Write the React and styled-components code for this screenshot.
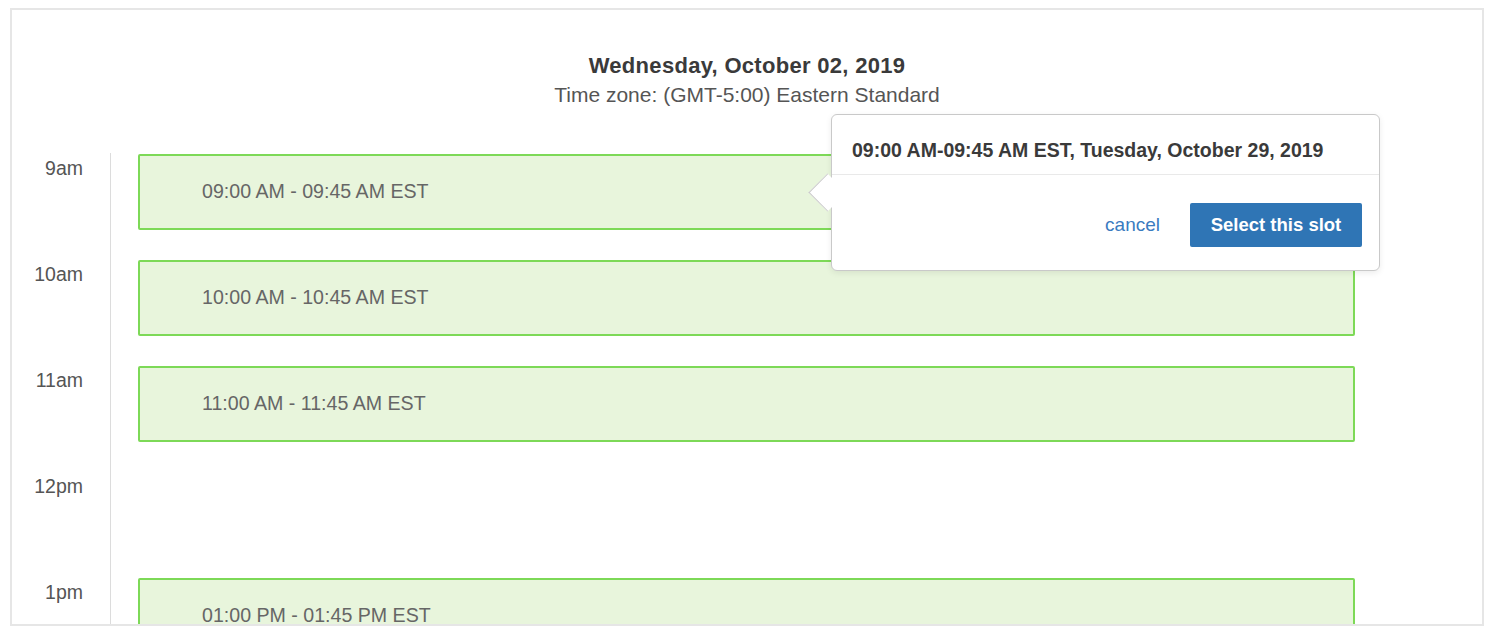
import React from 'react'
import styled, { createGlobalStyle } from 'styled-components'

const GlobalStyle = createGlobalStyle`
  html, body {
    margin: 0;
    padding: 0;
    background: #fff;
  }
  body {
    font-family: "Liberation Sans", Arial, Helvetica, sans-serif;
  }
`

const Page = styled.div`
  padding: 8px 10px 0 10px;
`

const Card = styled.div`
  position: relative;
  box-sizing: border-box;
  width: 1474px;
  height: 618px;
  border: 2px solid #e6e6e6;
  overflow: hidden;
  background: #fff;
`

const Header = styled.div`
  padding-top: 42px;
  text-align: center;
`

const Title = styled.div`
  font-size: 22px;
  font-weight: 700;
  letter-spacing: 0.3px;
  line-height: 28px;
  color: #3a3a3a;
`

const SubTitle = styled.div`
  font-size: 21px;
  line-height: 28px;
  color: #555;
  margin-top: 1px;
`

const Timeline = styled.div`
  margin-top: 44px;
  display: flex;
  flex-direction: column;
`

const HourRow = styled.div`
  display: grid;
  grid-template-columns: 98px 1fr;
  height: 106px;
`

const HourLabel = styled.div`
  box-sizing: border-box;
  padding: 3px 27px 0 0;
  text-align: right;
  font-size: 19.5px;
  line-height: 24px;
  color: #555;
`

const SlotColumn = styled.div`
  border-left: 1px solid #dcdcdc;
  padding: 1px 127px 0 27px;
`

const Slot = styled.div`
  box-sizing: border-box;
  height: 76px;
  display: flex;
  align-items: center;
  padding: 0 0 2px 62px;
  background: #e8f5dc;
  border: 2px solid #7dd957;
  border-radius: 2px;
  font-size: 19.6px;
  color: #666;
`

const Popover = styled.div`
  position: absolute;
  left: 819px;
  top: 104px;
  z-index: 2;
  box-sizing: border-box;
  width: 549px;
  height: 157px;
  background: #fff;
  border: 1px solid #c9c9c9;
  border-radius: 6px;
  box-shadow: 0 2px 6px rgba(0, 0, 0, 0.08);

  &::before {
    content: '';
    position: absolute;
    left: -18px;
    top: 64px;
    width: 26px;
    height: 26px;
    background: #fff;
    border-left: 1px solid #c9c9c9;
    border-bottom: 1px solid #c9c9c9;
    transform: rotate(45deg);
  }
`

const PopHeader = styled.div`
  padding: 23px 20px 12px 20px;
  font-size: 19.5px;
  font-weight: 700;
  line-height: 24px;
  color: #3a3a3a;
  border-bottom: 1px solid #e9e9e9;
`

const PopFooter = styled.div`
  display: flex;
  justify-content: flex-end;
  align-items: center;
  gap: 30px;
  padding: 28px 17px 0 0;
`

const CancelLink = styled.a`
  font-size: 19px;
  color: #3a7bbf;
  text-decoration: none;
  cursor: pointer;
`

const SelectButton = styled.button`
  width: 172px;
  height: 44px;
  border: none;
  border-radius: 2px;
  background: #2f75b5;
  color: #fff;
  font-family: inherit;
  font-size: 18.5px;
  font-weight: 700;
  cursor: pointer;
`

const hours = [
  { label: '9am', slot: '09:00 AM - 09:45 AM EST' },
  { label: '10am', slot: '10:00 AM - 10:45 AM EST' },
  { label: '11am', slot: '11:00 AM - 11:45 AM EST' },
  { label: '12pm', slot: null },
  { label: '1pm', slot: '01:00 PM - 01:45 PM EST' },
]

const App = () => {
  return (
    <Page>
      <GlobalStyle />
      <Card>
        <Header>
          <Title>Wednesday, October 02, 2019</Title>
          <SubTitle>Time zone: (GMT-5:00) Eastern Standard</SubTitle>
        </Header>

        <Timeline>
          {hours.map(({ label, slot }) => (
            <HourRow key={label}>
              <HourLabel>{label}</HourLabel>
              <SlotColumn>{slot && <Slot>{slot}</Slot>}</SlotColumn>
            </HourRow>
          ))}
        </Timeline>

        <Popover>
          <PopHeader>09:00 AM-09:45 AM EST, Tuesday, October 29, 2019</PopHeader>
          <PopFooter>
            <CancelLink>cancel</CancelLink>
            <SelectButton>Select this slot</SelectButton>
          </PopFooter>
        </Popover>
      </Card>
    </Page>
  )
}

export default App
